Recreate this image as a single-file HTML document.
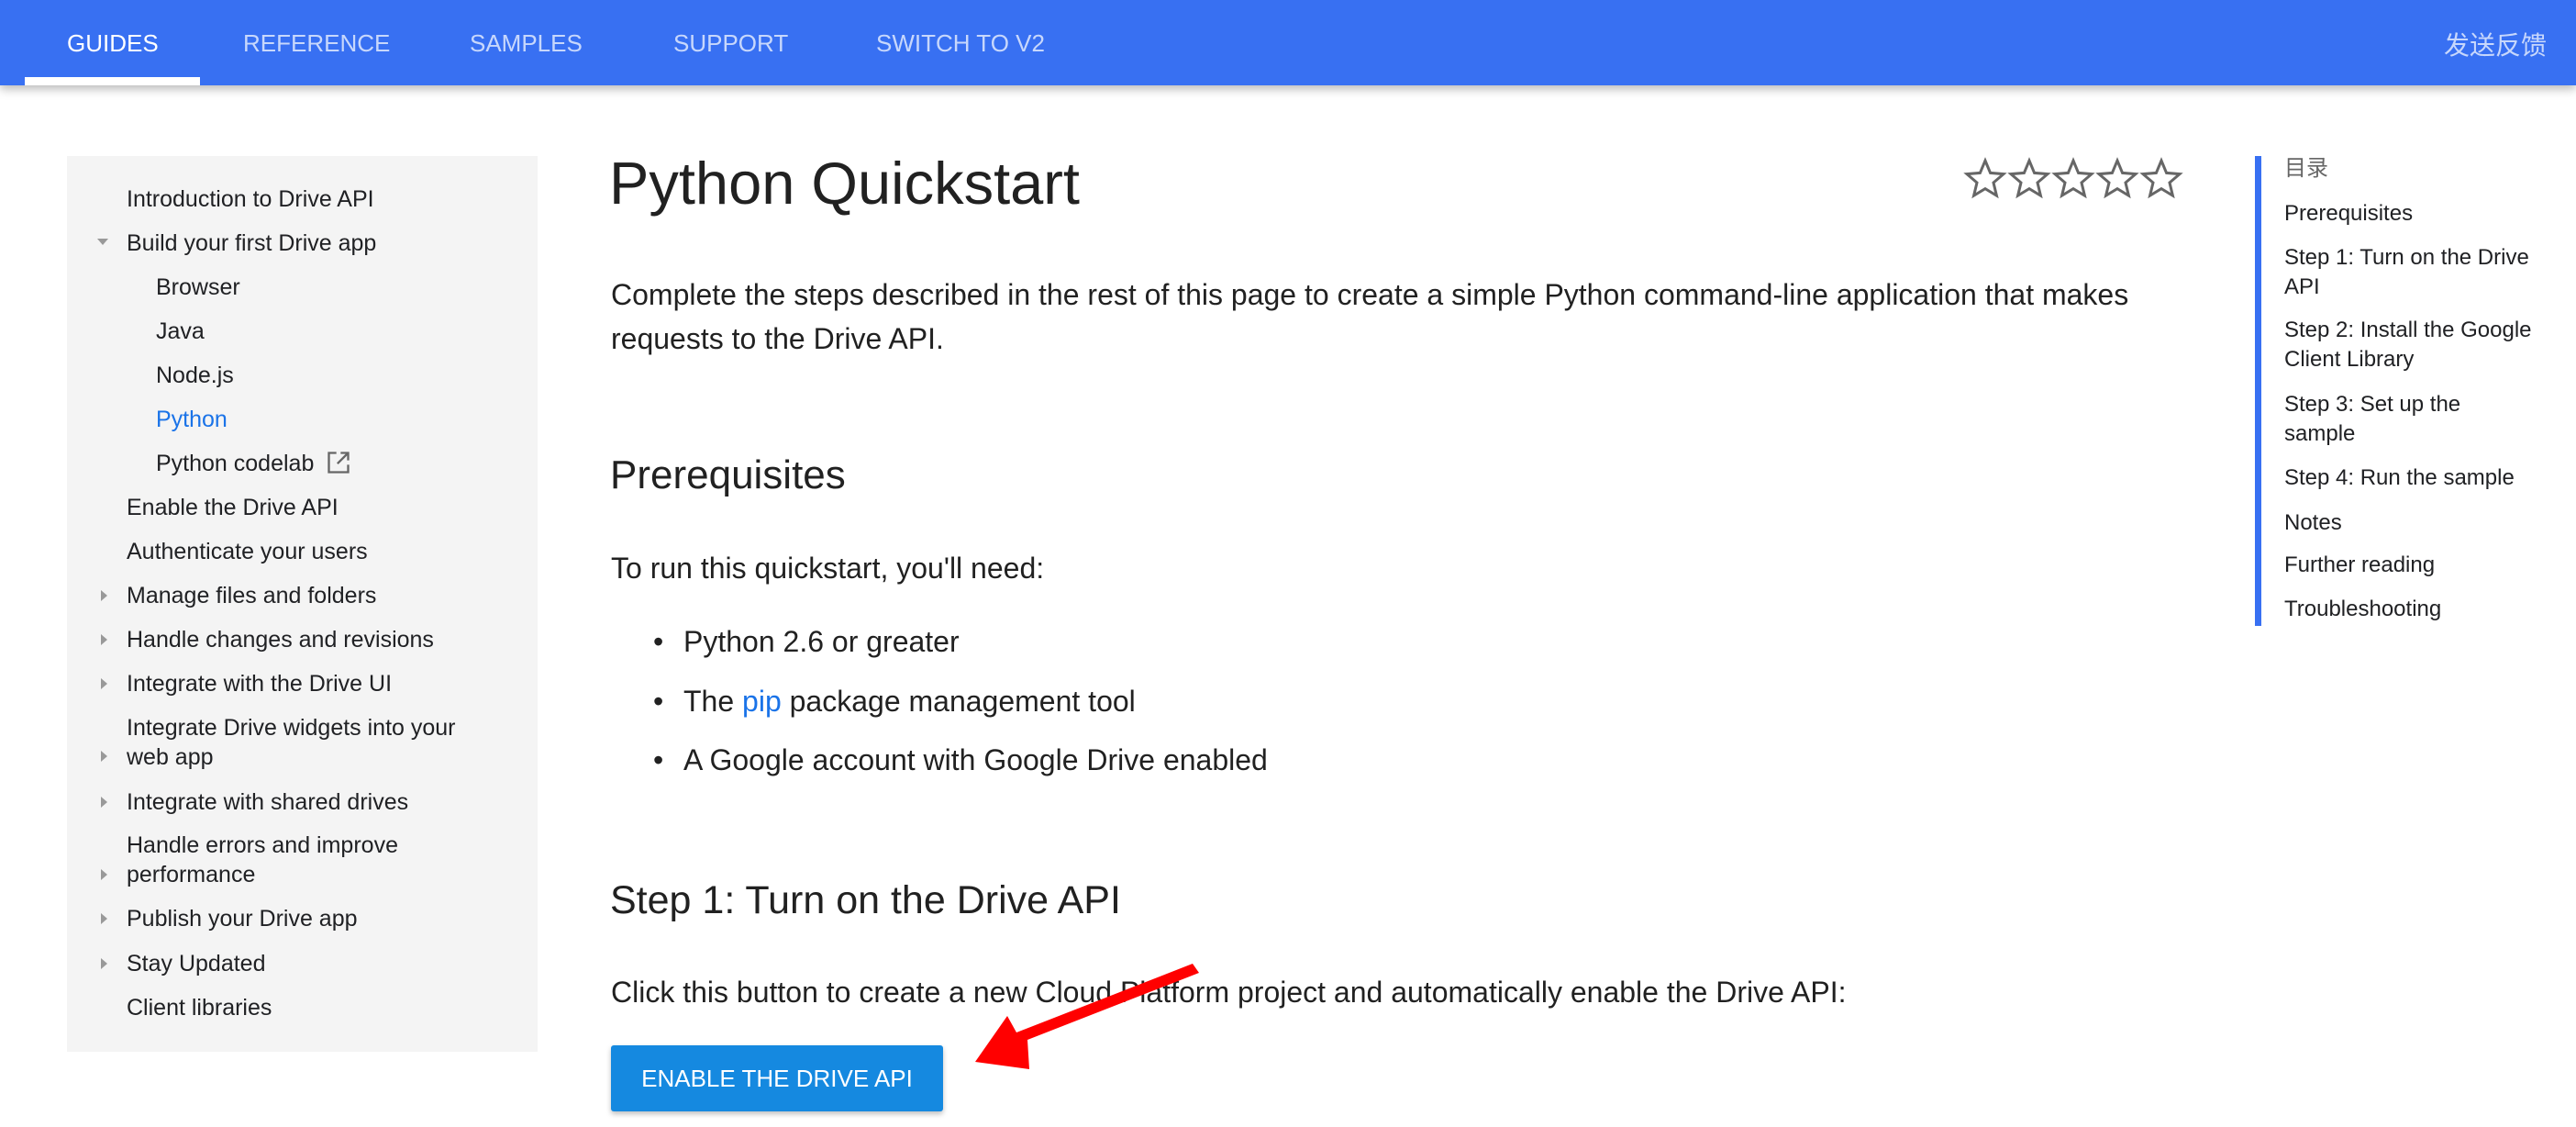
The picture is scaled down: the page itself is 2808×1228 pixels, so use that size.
<!DOCTYPE html>
<html><head><meta charset="utf-8"><style>
*{margin:0;padding:0;box-sizing:border-box}
body{width:2808px;height:1228px;position:relative;overflow:hidden;background:#fff;font-family:"Liberation Sans","Noto Sans CJK SC",sans-serif;color:#202124}
.nav{position:absolute;left:0;top:0;width:2808px;height:93px;background:#3870f2;box-shadow:0 4px 10px rgba(0,0,0,.28)}
.nav span{position:absolute;top:32px;font-size:26px;color:rgba(255,255,255,.72);font-weight:500;white-space:nowrap}
.nav .act{color:#fff}
.ul{position:absolute;left:27px;top:84px;width:191px;height:9px;background:#fff}
.side{position:absolute;left:73px;top:170px;width:513px;height:976px;background:#f4f4f4}
.s{position:absolute;font-size:25px;white-space:nowrap;line-height:30px;color:#202124}
.tri{position:absolute;width:0;height:0;border-top:6px solid transparent;border-bottom:6px solid transparent;border-left:7px solid #999}
.tri.d{border-left:6px solid transparent;border-right:6px solid transparent;border-top:7px solid #999;border-bottom:0}
.t{position:absolute;white-space:nowrap;color:#212121}
.toc{position:absolute;left:2490px;font-size:24px;line-height:32px;white-space:nowrap;color:#202124}
</style></head><body>
<div class="nav">
<span class="act" style="left:73px">GUIDES</span>
<span style="left:265px">REFERENCE</span>
<span style="left:512px">SAMPLES</span>
<span style="left:734px">SUPPORT</span>
<span style="left:955px">SWITCH TO V2</span>
<span style="left:2664px;top:28px;font-size:28px;font-weight:400">发送反馈</span>
<div class="ul"></div>
</div>

<div class="side"></div>
<div class="s" style="left:138px;top:202px">Introduction to Drive API</div>
<div class="tri d" style="left:106px;top:260px"></div>
<div class="s" style="left:138px;top:250px">Build your first Drive app</div>
<div class="s" style="left:170px;top:298px">Browser</div>
<div class="s" style="left:170px;top:346px">Java</div>
<div class="s" style="left:170px;top:394px">Node.js</div>
<div class="s" style="left:170px;top:442px;color:#1a73e8">Python</div>
<div class="s" style="left:170px;top:490px">Python codelab <svg width="28" height="28" viewBox="0 0 24 24" style="vertical-align:-5px;margin-left:6px"><path d="M10 3H3v18h18v-7" fill="none" stroke="#666" stroke-width="2"/><path d="M14 3h7v7M21 3L11 13" fill="none" stroke="#666" stroke-width="2"/></svg></div>
<div class="s" style="left:138px;top:538px">Enable the Drive API</div>
<div class="s" style="left:138px;top:586px">Authenticate your users</div>
<div class="tri" style="left:110px;top:643px"></div>
<div class="s" style="left:138px;top:634px">Manage files and folders</div>
<div class="tri" style="left:110px;top:691px"></div>
<div class="s" style="left:138px;top:682px">Handle changes and revisions</div>
<div class="tri" style="left:110px;top:739px"></div>
<div class="s" style="left:138px;top:730px">Integrate with the Drive UI</div>
<div class="tri" style="left:110px;top:818px"></div>
<div class="s" style="left:138px;top:778px">Integrate Drive widgets into your</div>
<div class="s" style="left:138px;top:810px">web app</div>
<div class="tri" style="left:110px;top:868px"></div>
<div class="s" style="left:138px;top:859px">Integrate with shared drives</div>
<div class="tri" style="left:110px;top:947px"></div>
<div class="s" style="left:138px;top:906px">Handle errors and improve</div>
<div class="s" style="left:138px;top:938px">performance</div>
<div class="tri" style="left:110px;top:995px"></div>
<div class="s" style="left:138px;top:986px">Publish your Drive app</div>
<div class="tri" style="left:110px;top:1044px"></div>
<div class="s" style="left:138px;top:1035px">Stay Updated</div>
<div class="s" style="left:138px;top:1083px">Client libraries</div>

<div class="t" style="left:664px;top:162px;font-size:65px;line-height:76px">Python Quickstart</div>
<svg style="position:absolute;left:2140px;top:170px" width="240" height="48" viewBox="0 0 240 48">
<g fill="none" stroke="#666" stroke-width="3">
<path id="st" d="M24 5l5.6 13.4 14.4 1.2-11 9.4 3.4 14.1L24 35.6l-12.4 7.5 3.4-14.1-11-9.4 14.4-1.2z"/>
<use href="#st" x="48"/><use href="#st" x="96"/><use href="#st" x="144"/><use href="#st" x="192"/>
</g></svg>

<div class="t" style="left:666px;top:297px;font-size:32px;line-height:48px">Complete the steps described in the rest of this page to create a simple Python command-line application that makes<br>requests to the Drive API.</div>
<div class="t" style="left:665px;top:490px;font-size:44px;line-height:56px">Prerequisites</div>
<div class="t" style="left:666px;top:601px;font-size:32px">To run this quickstart, you'll need:</div>
<div class="t" style="left:712px;top:681px;font-size:32px">•</div><div class="t" style="left:745px;top:681px;font-size:32px">Python 2.6 or greater</div>
<div class="t" style="left:712px;top:746px;font-size:32px">•</div><div class="t" style="left:745px;top:746px;font-size:32px">The <span style="color:#1a73e8">pip</span> package management tool</div>
<div class="t" style="left:712px;top:810px;font-size:32px">•</div><div class="t" style="left:745px;top:810px;font-size:32px">A Google account with Google Drive enabled</div>
<div class="t" style="left:665px;top:953px;font-size:43px;line-height:56px">Step 1: Turn on the Drive API</div>
<div class="t" style="left:666px;top:1063px;font-size:32px">Click this button to create a new Cloud Platform project and automatically enable the Drive API:</div>
<div style="position:absolute;left:666px;top:1139px;width:362px;height:72px;background:#1589e0;border-radius:3px;box-shadow:0 3px 6px rgba(0,0,0,.25);color:#fff;font-size:26px;font-weight:500;line-height:72px;text-align:center;white-space:nowrap">ENABLE THE DRIVE API</div>
<svg style="position:absolute;left:0;top:0" width="2808" height="1228"><polygon points="1300,1050 1307,1060 1120,1133 1122,1165 1063,1157 1098,1107 1108,1125" fill="#f00"/></svg>

<div style="position:absolute;left:2458px;top:170px;width:7px;height:512px;background:#3870f2"></div>
<div class="toc" style="top:168px;color:#666">目录</div>
<div class="toc" style="top:217px">Prerequisites</div>
<div class="toc" style="top:265px">Step 1: Turn on the Drive<br>API</div>
<div class="toc" style="top:344px">Step 2: Install the Google<br>Client Library</div>
<div class="toc" style="top:425px">Step 3: Set up the<br>sample</div>
<div class="toc" style="top:505px">Step 4: Run the sample</div>
<div class="toc" style="top:554px">Notes</div>
<div class="toc" style="top:600px">Further reading</div>
<div class="toc" style="top:648px">Troubleshooting</div>
</body></html>
